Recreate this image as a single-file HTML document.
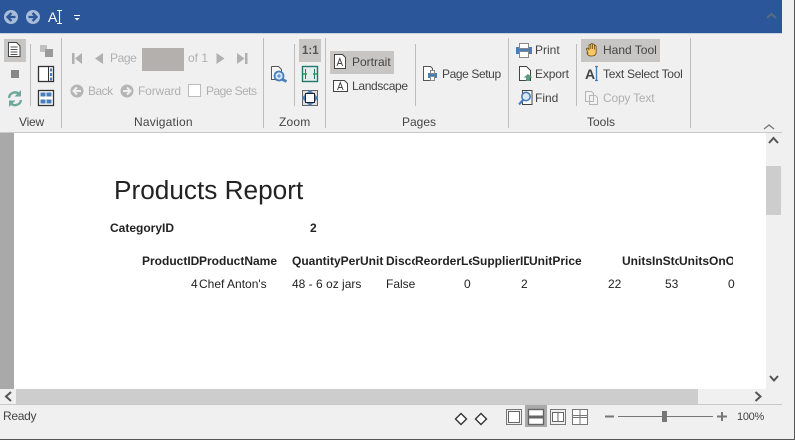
<!DOCTYPE html>
<html><head><meta charset="utf-8"><style>
html,body{margin:0;padding:0;width:795px;height:440px;overflow:hidden;background:#f0f0f0;font-family:"Liberation Sans",sans-serif}
#r{position:relative;width:795px;height:440px;overflow:hidden}
.a,.t,.b,.c{position:absolute}
.t{font-size:12px;color:#444;white-space:nowrap;line-height:14px}
.d{color:#b0b0b0}
.g{color:#444}
.b{font-weight:bold;font-size:12px;color:#222;white-space:nowrap;line-height:14px;overflow:hidden}
.c{font-size:12px;color:#222;white-space:nowrap;line-height:14px}
.s{position:absolute;background:#bdbdbd;width:1px}
svg{position:absolute;overflow:visible}
</style></head><body><div id="r">
<div class="a" style="left:0;top:0;width:782px;height:33px;background:#2b579a"></div>
<div class="a" style="left:0;top:33px;width:782px;height:1px;background:#c5d0e0"></div>
<div class="a" style="left:794px;top:0;width:1px;height:440px;background:#555"></div>
<div class="a" style="left:0;top:439px;width:795px;height:1px;background:#555"></div>

<svg style="left:0;top:0" width="795" height="33">
<circle cx="11" cy="17" r="7" fill="#a9bcd8"/><path d="M15.500 17H8M11.500 13l-4 4 4 4" fill="none" stroke="#2b579a" stroke-width="2.300"/>
<circle cx="33" cy="17" r="7" fill="#a9bcd8"/><path d="M28.500 17H36M32.500 13l4 4-4 4" fill="none" stroke="#2b579a" stroke-width="2.300"/>
<path d="M57 10.500h5M59.500 10.500v13M57 23.500h5" stroke="#fff" stroke-width="1.100" fill="none"/>
<path d="M74 15h6v1h-6zM74.500 18h5l-2.500 2.500z" fill="#fff"/>
<path d="M767 18l4.500-4 4.500 4" fill="none" stroke="#5a6a80" stroke-width="2"/>
</svg>
<div class="t" style="left:48px;top:9px;font-size:14px;line-height:16px;color:#fff">A</div>

<!-- ribbon highlights -->
<div class="a" style="left:4px;top:39px;width:22px;height:23px;background:#c8c6c4"></div>
<div class="a" style="left:299px;top:39px;width:22px;height:23px;background:#c8c6c4"></div>
<div class="a" style="left:330px;top:51px;width:64px;height:23px;background:#c8c6c4"></div>
<div class="a" style="left:581px;top:39px;width:79px;height:23px;background:#c8c6c4"></div>
<div class="a" style="left:142px;top:48px;width:42px;height:23px;background:#b3b0ad"></div>

<!-- separators -->
<div class="s" style="left:30px;top:44px;height:62px"></div>
<div class="s" style="left:61px;top:38px;height:90px"></div>
<div class="s" style="left:263px;top:38px;height:90px"></div>
<div class="s" style="left:294px;top:44px;height:62px"></div>
<div class="s" style="left:325px;top:38px;height:90px"></div>
<div class="s" style="left:415px;top:44px;height:62px"></div>
<div class="s" style="left:508px;top:38px;height:90px"></div>
<div class="s" style="left:576px;top:44px;height:62px"></div>
<div class="s" style="left:690px;top:38px;height:90px"></div>

<svg style="left:0;top:0" width="795" height="135">
<!-- view icons -->
<path d="M8.500 42.500h8l3.500 3.500v10.500H8.500z" fill="#fff" stroke="#444"/><path d="M10.500 47h7M10.500 49.500h7M10.500 52h7M10.500 54.500h7" stroke="#555"/>
<rect x="11" y="70" width="8" height="8" fill="#888"/>
<path d="M9 98a6 6 0 0 1 10.500-3.500M21 100a6 6 0 0 1-10.500 3" fill="none" stroke="#6ea899" stroke-width="2.400"/><path d="M21 90v6.500h-6.500zM9 107v-6.500h6.500z" fill="#6ea899"/>
<rect x="40" y="45" width="7" height="7" fill="#c0c0c0"/><rect x="45" y="49" width="8" height="8" fill="#9a9a9a"/>
<rect x="38.500" y="66.500" width="15" height="15" fill="#fff" stroke="#333" stroke-width="1.300"/><path d="M48.500 66.500v15" stroke="#333"/><path d="M51 68.500v3M51 73v3M51 77.500v3" stroke="#4a7ebb" stroke-width="2.200"/>
<rect x="38.500" y="90.500" width="15" height="15" fill="#fff" stroke="#333" stroke-width="1.300"/><path d="M40.500 92.500h5v4h-5zM46.500 92.500h5v4h-5zM40.500 99.500h5v4h-5zM46.500 99.500h5v4h-5z" fill="#4a7ebb"/>
<!-- nav icons -->
<path d="M72 53h2.500v11H72zM82 53v11l-7-5.500z" fill="#b0b0b0"/>
<path d="M103 53v11l-8-5.500z" fill="#b0b0b0"/>
<path d="M216.500 53v11l8-5.500z" fill="#b0b0b0"/>
<path d="M237 53v11l7.500-5.500zM245 53h2.500v11H245z" fill="#b0b0b0"/>
<circle cx="77" cy="91" r="6.500" fill="#b5b5b5"/><path d="M81 91h-7M77 87.500L73.500 91l3.500 3.500" fill="none" stroke="#f0f0f0" stroke-width="2"/>
<circle cx="127" cy="91" r="6.500" fill="#b5b5b5"/><path d="M123 91h7M127 87.500l3.500 3.500-3.500 3.500" fill="none" stroke="#f0f0f0" stroke-width="2"/>
<rect x="188.500" y="84.500" width="12" height="12" fill="#fff" stroke="#bbb"/>
<!-- zoom icons -->
<path d="M271.500 66.500h7l3 3v2M271.500 66.500v13h5" fill="#fff" stroke="#555"/><circle cx="279" cy="76" r="4.500" fill="#dce8f5" stroke="#4a7ebb" stroke-width="1.800"/><path d="M277 76h4M279 74v4" stroke="#4a7ebb"/><path d="M282.500 79.500l4 2" stroke="#4a7ebb" stroke-width="2.800"/>
<rect x="302.500" y="66.500" width="15" height="15" fill="#e8ecea" stroke="#1f7a6e" stroke-width="1.400"/><path d="M305.500 69v10M314.500 69v10" stroke="#1f7a6e"/><path d="M303 74h4M313 74h4" stroke="#2aa050" stroke-width="1.500"/>
<rect x="302.500" y="90.500" width="15" height="15" fill="#e0e0e0" stroke="#666"/><path d="M310 90l3.500 3h-7zM310 106l3.500-3h-7zM302 98l3-3.500v7zM318 98l-3-3.500v7z" fill="#4a7ebb"/><rect x="305.500" y="93.500" width="9" height="9" fill="#fff" stroke="#222"/>
<!-- pages icons -->
<path d="M334.500 54.500h8l3 3v11h-11z" fill="#fff" stroke="#444"/><path d="M337 66l2.800-7.500 2.800 7.500M338 63.500h3.500" fill="none" stroke="#444"/>
<path d="M333.500 80.500h11l3 3v8h-14z" fill="#fff" stroke="#444"/><path d="M337.500 90l2.800-7.500 2.800 7.500M338.500 87.500h3.500" fill="none" stroke="#444"/>
<path d="M423.500 66.500h7l2 2v12h-9z" fill="#fff" stroke="#555"/><rect x="428" y="73" width="9" height="5" fill="#4a7ebb"/><rect x="430.500" y="70.500" width="4" height="3" fill="#fff" stroke="#888"/><rect x="430.500" y="76.500" width="4" height="4" fill="#fff" stroke="#888"/>
<!-- print etc -->
<rect x="516" y="47" width="16" height="7" fill="#4a7ebb"/><rect x="519.500" y="43.500" width="9" height="5" fill="#fff" stroke="#888"/><rect x="519.500" y="51.500" width="9" height="6" fill="#fff" stroke="#888"/>
<path d="M519.500 66.500h7l4 4v10h-11z" fill="#fff" stroke="#444"/><path d="M528 74l4.500 3.500H530v3.500h-4v-3.500h-2.500z" fill="#5a9a80"/>
<path d="M522.500 90.500h9.500v14h-9.500z" fill="#fff" stroke="#444"/><circle cx="526" cy="96.500" r="4.200" fill="#dce8f5" stroke="#4a7ebb" stroke-width="1.600"/><path d="M523 100l-4 4.500" stroke="#4a7ebb" stroke-width="2.200"/>
<!-- hand -->
<path d="M588 53L586.500 49.500c-.4-1.200 1-1.800 1.800-.8L589 50V45.500c0-1.300 1.800-1.300 1.800 0V49V44.500c0-1.300 1.800-1.300 1.800 0V49V45c0-1.300 1.800-1.300 1.800 0V49.500V46.500c0-1.300 1.800-1.300 1.800 0V52c0 2.500-1.500 4-4.300 4h-1.500c-1.800 0-2.800-1-3.500-3z" fill="#f6c667" stroke="#6b4e16" stroke-width=".8"/>
<!-- A| -->
<path d="M595 66.500h3M596.500 66.500v14M595 80.500h3" fill="none" stroke="#4a7ebb" stroke-width="1.300"/>
<!-- copy -->
<path d="M585.500 91.500h6l2 2v8h-8zM589.500 95.500h6l2 2v7h-8z" fill="#f2f2f2" stroke="#b5b5b5"/>
<!-- collapse -->
<path d="M764 129l5-4 5 4" fill="none" stroke="#777" stroke-width="1.300"/>
</svg>

<div class="t" style="left:585px;top:66px;font-size:14px;line-height:16px;font-weight:bold;color:#444">A</div>
<div class="t g" style="left:19px;top:115px;letter-spacing:-.2px">View</div>
<div class="t g" style="left:134px;top:115px;letter-spacing:.2px">Navigation</div>
<div class="t g" style="left:279px;top:115px;letter-spacing:.2px">Zoom</div>
<div class="t g" style="left:402px;top:115px">Pages</div>
<div class="t g" style="left:587px;top:115px">Tools</div>
<div class="t d" style="left:110px;top:51px;letter-spacing:-.4px">Page</div>
<div class="t d" style="left:188px;top:51px">of 1</div>
<div class="t d" style="left:88px;top:84px;letter-spacing:-.5px">Back</div>
<div class="t d" style="left:138px;top:84px;letter-spacing:-.15px">Forward</div>
<div class="t d" style="left:206px;top:84px;letter-spacing:-.55px">Page Sets</div>
<div class="t" style="left:352px;top:55px">Portrait</div>
<div class="t" style="left:352px;top:79px;letter-spacing:-.33px">Landscape</div>
<div class="t" style="left:442px;top:67px;letter-spacing:-.4px">Page Setup</div>
<div class="t" style="left:535px;top:43px">Print</div>
<div class="t" style="left:535px;top:67px;letter-spacing:-.15px">Export</div>
<div class="t" style="left:535px;top:91px">Find</div>
<div class="t" style="left:603px;top:43px">Hand Tool</div>
<div class="t" style="left:603px;top:67px;letter-spacing:-.27px">Text Select Tool</div>
<div class="t d" style="left:603px;top:91px;letter-spacing:-.2px">Copy Text</div>
<div class="t" style="left:302px;top:44px;font-weight:bold;font-size:11.500px;color:#555">1:1</div>

<!-- content -->
<div class="a" style="left:0;top:132px;width:782px;height:1px;background:#c8c8c8"></div>
<div class="a" style="left:0;top:133px;width:14px;height:256px;background:#a9a9a9"></div>
<div class="a" style="left:14px;top:133px;width:752px;height:256px;background:#fff"></div>
<div class="a" style="left:766px;top:133px;width:16px;height:256px;background:#f0f0f0"></div>
<div class="a" style="left:766px;top:166px;width:15px;height:49px;background:#cdcdcd"></div>
<div class="a" style="left:0;top:389px;width:782px;height:15px;background:#f0f0f0"></div>
<div class="a" style="left:16px;top:389px;width:682px;height:15px;background:#cdcdcd"></div>
<svg style="left:0;top:0" width="795" height="440">
<path d="M769 143l4.500-5 4.500 5M770 376l4 4.500 4-4.500" fill="none" stroke="#555" stroke-width="2"/>
<path d="M11 392l-5 4.500 5 4.500M755.500 392l5 4.500-5 4.500" fill="none" stroke="#555" stroke-width="2"/>
</svg>

<div class="c" style="left:114px;top:175px;font-size:26.200px;line-height:30px;color:#222">Products Report</div>
<div class="b" style="left:110px;top:221px">CategoryID</div>
<div class="b" style="left:310px;top:221px">2</div>
<div class="b" style="left:142px;top:254px;width:57px">ProductID</div>
<div class="b" style="left:199px;top:254px;width:90px">ProductName</div>
<div class="b" style="left:292px;top:254px;width:94px">QuantityPerUnit</div>
<div class="b" style="left:386px;top:254px;width:29px">Discontinued</div>
<div class="b" style="left:415px;top:254px;width:57px">ReorderLevel</div>
<div class="b" style="left:472px;top:254px;width:57px">SupplierID</div>
<div class="b" style="left:529px;top:254px;width:90px">UnitPrice</div>
<div class="b" style="left:622px;top:254px;width:57px">UnitsInStock</div>
<div class="b" style="left:679px;top:254px;width:54px">UnitsOnOrder</div>
<div class="c" style="left:191px;top:277px">4</div>
<div class="c" style="left:199px;top:277px">Chef Anton's</div>
<div class="c" style="left:292px;top:277px">48 - 6 oz jars</div>
<div class="c" style="left:386px;top:277px">False</div>
<div class="c" style="left:464px;top:277px">0</div>
<div class="c" style="left:521px;top:277px">2</div>
<div class="c" style="left:608px;top:277px">22</div>
<div class="c" style="left:665px;top:277px">53</div>
<div class="c" style="left:728px;top:277px">0</div>

<!-- status -->
<div class="a" style="left:0;top:404px;width:782px;height:1px;background:#c8c8c8"></div>
<div class="t" style="left:3px;top:409px;font-size:12px;color:#444;letter-spacing:-.3px">Ready</div>
<div class="a" style="left:525px;top:405px;width:22px;height:22px;background:#aaa"></div>
<svg style="left:0;top:0" width="795" height="440">
<path d="M461 413.500l5.500 5.500-5.500 5.500-5.500-5.500zM481 413.500l5.500 5.500-5.500 5.500-5.500-5.500z" fill="#fff" stroke="#333" stroke-width="1.400"/>
<rect x="506.500" y="409.500" width="15" height="15" fill="none" stroke="#777"/><rect x="508.500" y="411.500" width="11" height="11" fill="#fff" stroke="#666"/>
<rect x="528.500" y="409.500" width="15" height="15" fill="#fff" stroke="#666" stroke-width="1.400"/><path d="M528 417h16" stroke="#666" stroke-width="3"/>
<rect x="550.500" y="409.500" width="15" height="15" fill="none" stroke="#777"/><rect x="552.500" y="412.500" width="11" height="9" fill="#fff" stroke="#666"/><path d="M558 412v10" stroke="#666"/>
<path d="M572.500 409.500h15v15h-15zM572.500 415.500h15M580 409.500v15M572.500 417.500h15" fill="#fff" stroke="#777"/>
<path d="M618 416.500h95" stroke="#777" stroke-width="1"/>
<path d="M605 416.500h9M717 416.500h10M722 412v9" stroke="#777" stroke-width="2"/>
<rect x="662" y="411" width="5" height="11" fill="#777"/>
</svg>
<div class="t" style="left:737px;top:410px;font-size:11px;color:#444;letter-spacing:-.3px">100%</div>
</div></body></html>
